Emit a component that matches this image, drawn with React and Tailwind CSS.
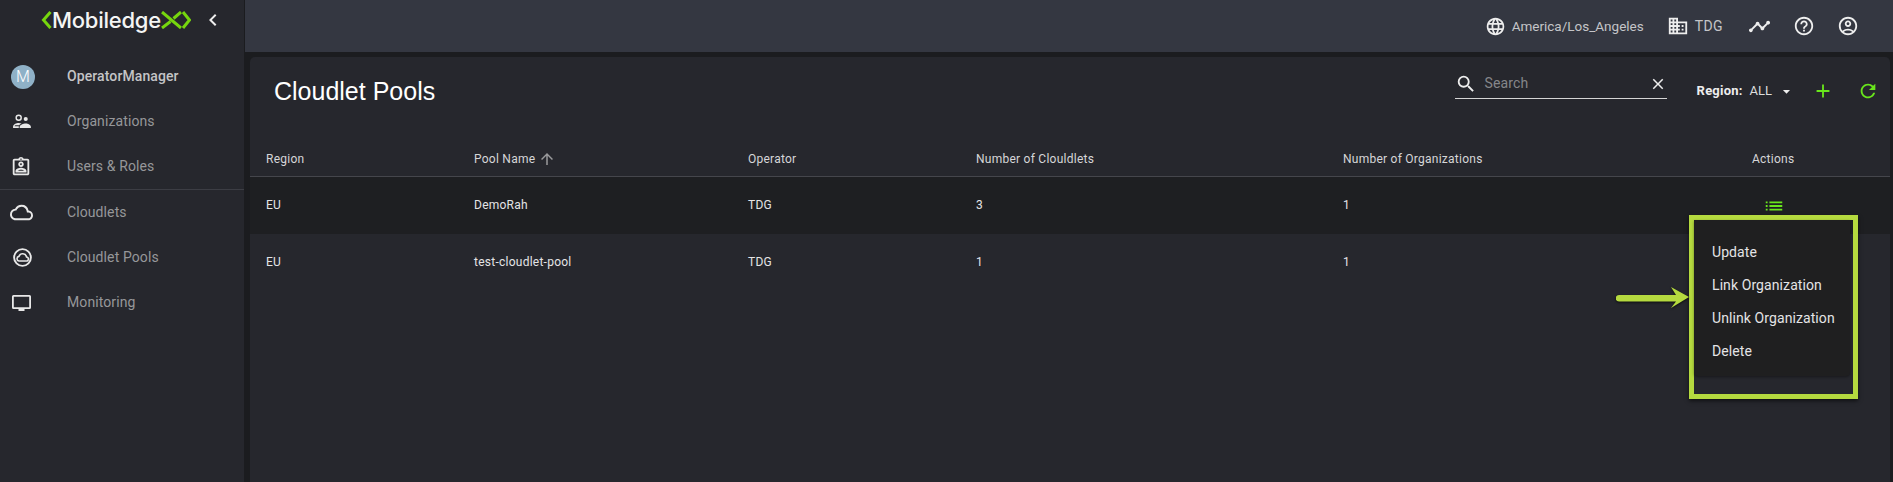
import {
  MdAdd,
  MdArrowDropDown,
  MdArrowUpward,
  MdChevronLeft,
  MdClose,
  MdDomain,
  MdHelpOutline,
  MdLanguage,
  MdList,
  MdOutlineAccountCircle,
  MdOutlineAssignmentInd,
  MdOutlineCloud,
  MdRefresh,
  MdSearch,
  MdTimeline,
} from 'react-icons/md';

const columns = ['w-[208px]', 'w-[274px]', 'w-[228px]', 'w-[367px]', 'w-[409px]'];
const headers = ['Region', 'Pool Name', 'Operator', 'Number of Clouldlets', 'Number of Organizations'];
const rows = [
  ['EU', 'DemoRah', 'TDG', '3', '1'],
  ['EU', 'test-cloudlet-pool', 'TDG', '1', '1'],
];
const menuItems = ['Update', 'Link Organization', 'Unlink Organization', 'Delete'];

function OrgIcon() {
  return (
    <svg viewBox="0 0 20 16" className="ml-[1px] h-[15px] w-[19px]" fill="currentColor">
      <circle cx="7" cy="4" r="2.700" fill="none" stroke="currentColor" strokeWidth="1.500" />
      <circle cx="14.500" cy="5.300" r="2.200" />
      <path d="M1 15v-1.600C1 11 4.500 9.500 7 9.500c1 0 2 .2 3 .6-1 .5-2 1.200-2.400 1.900H3.500c-.6.2-1 .6-1 1.300V13h4.600v2z" />
      <path d="M8 15v-1.200c0-2 4-3.600 6.500-3.600s5.500 1.600 5.500 3.600V15z" />
    </svg>
  );
}

function PoolIcon() {
  return (
    <svg viewBox="0 0 24 24" className="ml-[2px] size-[19px]" fill="none" stroke="currentColor" strokeWidth="2.400">
      <circle cx="12" cy="12" r="10.600" />
      <path strokeWidth="2" d="M7.500 16.500h9.200a2.600 2.600 0 0 0 .4-5.200 5 5 0 0 0-9.600-.7 3 3 0 0 0 0 5.900z" />
    </svg>
  );
}

function MonitorIcon() {
  return (
    <svg viewBox="0 0 19 16" className="ml-[1px] h-[16px] w-[19px]" fill="currentColor">
      <path fillRule="evenodd" d="M1.500 0h16A1.500 1.500 0 0 1 19 1.500v11a1.500 1.500 0 0 1-1.500 1.500h-16A1.500 1.500 0 0 1 0 12.500v-11A1.500 1.500 0 0 1 1.500 0zm.3 1.800v10.400h15.400V1.800z" />
      <rect x="6.500" y="14" width="6" height="2" />
    </svg>
  );
}

function Logo() {
  return (
    <div className="flex items-center text-[#f4f5f4]">
      <svg viewBox="0 0 11 18" className="h-[18px] w-[11px]" fill="none" stroke="#76d60e" strokeWidth="3">
        <path d="M9.500 1 2.500 9l7 8" />
      </svg>
      <span className="text-[22px] leading-none font-medium tracking-[-0.25px] font-['Inter',sans-serif]">Mobiledge</span>
      <svg viewBox="0 0 30 18" className="h-[18px] w-[30px]" fill="none" stroke="#76d60e" strokeWidth="3">
        <path d="M1 1l19 16M20 1l-7.500 6.500M9.500 10.500 1 17" />
        <path d="M22 1l6.500 8-6.500 8" />
      </svg>
    </div>
  );
}

function NavItem({ icon, label, bold }) {
  return (
    <div className="flex h-[45px] items-center">
      <div className="flex w-[67px] justify-start pl-[11px] text-[#e8e8e8]">{icon}</div>
      <span className={`text-[14px] tracking-[0.1px] ${bold ? 'font-medium text-[#c4c4c6]' : 'text-[#96979a]'}`}>{label}</span>
    </div>
  );
}

export default function App() {
  return (
    <div className="relative flex h-[482px] w-[1893px] overflow-hidden bg-[#1b1c1f] font-['Roboto',sans-serif]">
      <aside className="w-[245px] shrink-0 border-r border-[#1b1c1f] bg-[#26272d]">
        <div className="mb-[14px] flex h-[40px] items-center pl-[41px]">
          <Logo />
          <MdChevronLeft className="ml-[10px] size-[24px] text-[#eee]" />
        </div>
        <NavItem
          bold
          label="OperatorManager"
          icon={
            <div className="flex size-[24px] items-center justify-center rounded-full bg-[#8fb1c7] text-[16px] font-light text-white">M</div>
          }
        />
        <NavItem label="Organizations" icon={<OrgIcon />} />
        <NavItem label="Users &amp; Roles" icon={<MdOutlineAssignmentInd className="-ml-[1px] size-[22px]" />} />
        <div className="border-t border-[#3c3d44]" />
        <NavItem label="Cloudlets" icon={<MdOutlineCloud className="-ml-[1px] size-[23px]" />} />
        <NavItem label="Cloudlet Pools" icon={<PoolIcon />} />
        <NavItem label="Monitoring" icon={<MonitorIcon />} />
      </aside>

      <div className="flex min-w-0 flex-1 flex-col">
        <header className="flex h-[52px] shrink-0 items-center justify-end bg-[#343741] pr-[34px] text-[#c4c5c8]">
          <MdLanguage className="size-[21px] text-[#eee]" />
          <span className="ml-[6px] text-[13.500px]">America/Los_Angeles</span>
          <MdDomain className="ml-[23px] size-[22px] text-[#eee]" />
          <span className="ml-[6px] text-[14px] tracking-[0.400px]">TDG</span>
          <MdTimeline className="ml-[25px] size-[23px] text-[#eee]" />
          <MdHelpOutline className="ml-[22px] size-[22px] text-[#eee]" />
          <MdOutlineAccountCircle className="ml-[22px] size-[22px] text-[#eee]" />
        </header>

        <main className="mt-[5px] mr-[3px] ml-[5px] flex-1 rounded-t-[5px] bg-[#26272d]">
          <div className="flex h-[72px] items-center justify-between pr-[11px] pl-[24px]">
            <h1 className="pb-[3px] font-['Liberation_Sans',sans-serif] text-[25px] text-white">Cloudlet Pools</h1>
            <div className="flex items-center">
              <div className="mb-[18px] flex h-[30px] w-[212px] items-center border-b border-[#d5d5d5]">
                <MdSearch className="size-[22px] text-[#eee]" />
                <span className="ml-[8px] flex-1 text-[14px] tracking-[0.1px] text-[#85868a]">Search</span>
                <MdClose className="size-[18px] text-[#eee]" />
              </div>
              <div className="mb-[4px] ml-[30px] flex items-center text-[13px]">
                <span className="font-bold tracking-[0.2px] text-[#eee]">Region:</span>
                <span className="ml-[7px] text-[#ddd]">ALL</span>
                <MdArrowDropDown className="ml-[6px] size-[17px] text-[#eee]" />
              </div>
              <MdAdd className="mb-[4px] ml-[17px] size-[22px] text-[#69e61c]" />
              <MdRefresh className="mb-[4px] ml-[23px] size-[22px] text-[#69e61c]" />
            </div>
          </div>

          <div className="flex h-[48px] items-center border-b border-[#45464c] pt-[12px] pl-[16px] text-[12px] tracking-[0.25px] text-[#d6d6d8]">
            {headers.map((h, i) => (
              <div key={h} className={`flex items-center ${columns[i]}`}>
                {h}
                {h === 'Pool Name' && <MdArrowUpward className="ml-[3px] size-[18px] text-[#9a9a9c]" />}
              </div>
            ))}
            <div className="flex-1">Actions</div>
          </div>

          {rows.map((row, r) => (
            <div key={row[1]} className={`flex h-[57px] items-center pb-[2px] pl-[16px] text-[12px] tracking-[0.25px] text-[#e4e4e6] ${r === 0 ? 'bg-[#1e1f22]' : ''}`}>
              {row.map((cell, i) => (
                <div key={i} className={columns[i]}>{cell}</div>
              ))}
              {r === 0 && <MdList className="mt-[2px] ml-[11px] size-[22px] text-[#69e61c]" />}
            </div>
          ))}
        </main>
      </div>

      {/* annotation box + arrow drawn over the open action menu */}
      <div className="absolute top-[215px] left-[1689px] h-[184px] w-[169px] border-[5px] border-[#b5da3f] shadow-[0_2px_4px_rgba(0,0,0,0.6)]">
        <div className="h-[156px] w-[156px] rounded-b-[4px] bg-[#1f1f20] pt-[16px] text-[14px] tracking-[0.09px] text-[#e4e4e6] shadow-[0_1px_3px_rgba(0,0,0,0.4)]">
          {menuItems.map((m) => (
            <div key={m} className="flex h-[33px] items-center pl-[18px] whitespace-nowrap">{m}</div>
          ))}
        </div>
      </div>
      <svg viewBox="0 0 74 26" className="absolute top-[285px] left-[1616px] h-[26px] w-[74px] drop-shadow-[0_1px_1px_rgba(0,0,0,0.7)]">
        <path d="M3 10h57l-5-8 18 10-18 11 5-6.500H3a3.200 3.200 0 0 1 0-6.500z" fill="#b5da3f" />
      </svg>
    </div>
  );
}
